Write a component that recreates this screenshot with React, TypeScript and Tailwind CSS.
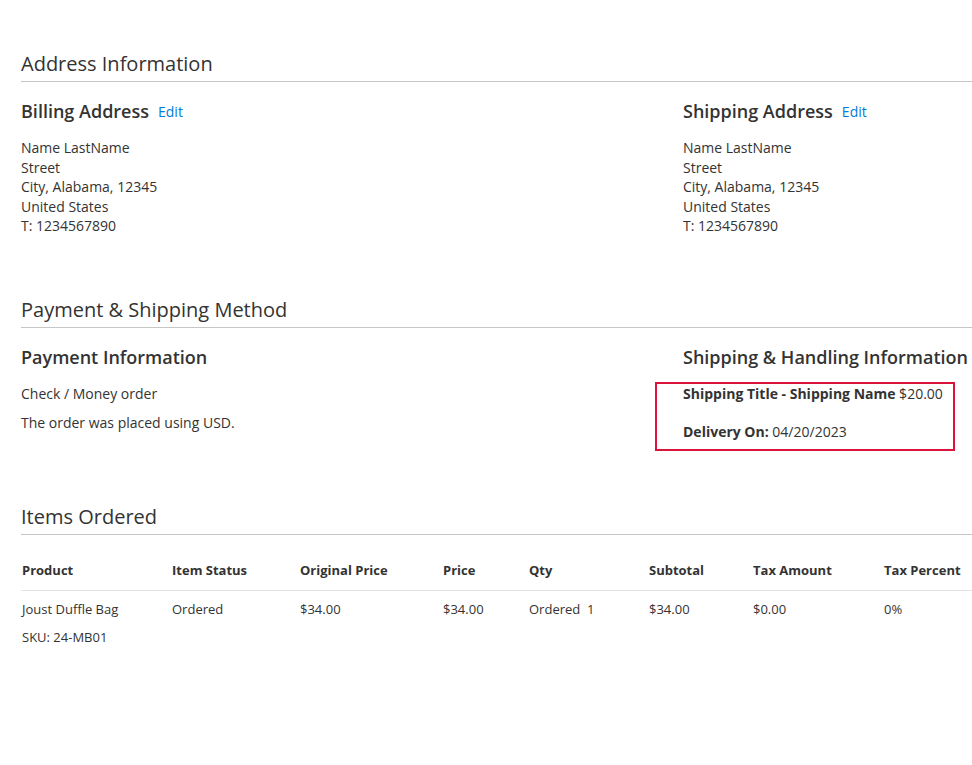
import React from "react";

const address = ["Name LastName", "Street", "City, Alabama, 12345", "United States", "T: 1234567890"];

const SectionTitle = ({ children }: { children: React.ReactNode }) => (
  <div className="border-b border-[#c6c6c6] pb-[3px]">
    <h2 className="text-[20px] leading-[28px] font-normal text-[#333]">{children}</h2>
  </div>
);

const BoxTitle = ({ title, edit }: { title: string; edit?: boolean }) => (
  <div className="flex items-baseline gap-[9px] h-[24px] -translate-y-[1px]">
    <h3 className="text-[18px] leading-[24px] font-semibold text-[#333] whitespace-nowrap">{title}</h3>
    {edit && <a className="text-[14px] text-[#007bdb] cursor-pointer -translate-y-[1px]">Edit</a>}
  </div>
);

const AddressBox = ({ title }: { title: string }) => (
  <div>
    <BoxTitle title={title} edit />
    <div className="mt-[14px] text-[14px] leading-[19.5px]">
      {address.map((line) => (
        <div key={line}>{line}</div>
      ))}
    </div>
  </div>
);

const cols = ["Product", "Item Status", "Original Price", "Price", "Qty", "Subtotal", "Tax Amount", "Tax Percent"];
const row = ["Joust Duffle Bag", "Ordered", "$34.00", "$34.00", "Ordered\u00a0 1", "$34.00", "$0.00", "0%"];
const grid = "grid grid-cols-[151px_128px_143px_86px_120px_104px_131px_1fr]";

export default function App() {
  return (
    <div className="min-h-screen bg-white pl-[21px] pt-[50px] text-[#333]" style={{ fontFamily: '"Open Sans", sans-serif' }}>
      <section>
        <SectionTitle>Address Information</SectionTitle>
        <div className="grid grid-cols-[662px_1fr] mt-[18px]">
          <AddressBox title="Billing Address" />
          <AddressBox title="Shipping Address" />
        </div>
      </section>

      <section className="mt-[60px]">
        <SectionTitle>Payment &amp; Shipping Method</SectionTitle>
        <div className="grid grid-cols-[662px_1fr] mt-[18px]">
          <div>
            <BoxTitle title="Payment Information" />
            <div className="mt-[14px] text-[14px] leading-5">
              <p>Check / Money order</p>
              <p className="mt-[9px]">The order was placed using USD.</p>
            </div>
          </div>
          <div>
            <BoxTitle title="Shipping & Handling Information" />
            <div className="mt-[12px] -ml-[28px] w-[300px] border-2 border-[#dc143c] pl-[26px] pb-[7px] text-[14px] leading-5">
              <div>
                <span className="font-bold">Shipping Title - Shipping Name</span> $20.00
              </div>
              <div className="mt-[18px]">
                <span className="font-bold">Delivery On:</span> 04/20/2023
              </div>
            </div>
          </div>
        </div>
      </section>

      <section className="mt-[52px]">
        <SectionTitle>Items Ordered</SectionTitle>
        <div className="text-[13px] leading-5">
          <div className={`${grid} border-b border-[#e3e3e3] pt-[25px] pb-[10px] font-bold`}>
            {cols.map((c, i) => (
              <div key={c} className={`whitespace-nowrap ${i === 0 ? "pl-[1px]" : ""}`}>{c}</div>
            ))}
          </div>
          <div className={`${grid} pt-[8px]`}>
            {row.map((c, i) => (
              <div key={i} className={`whitespace-nowrap ${i === 0 ? "pl-[1px]" : ""}`}>
                {c}
                {i === 0 && <div className="mt-[8px]">SKU: 24-MB01</div>}
              </div>
            ))}
          </div>
        </div>
      </section>
    </div>
  );
}
